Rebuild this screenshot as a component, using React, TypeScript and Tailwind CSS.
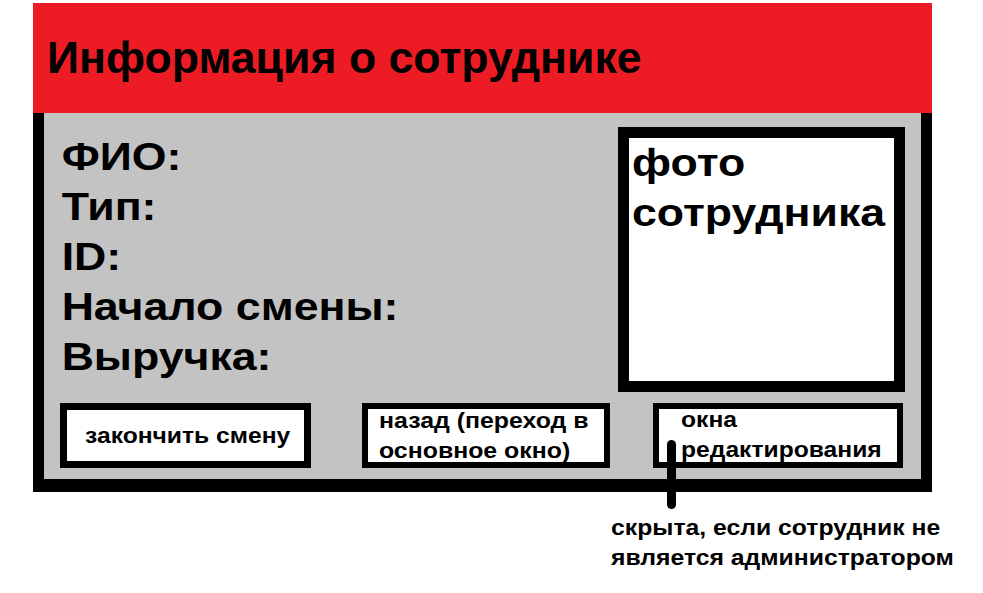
const labels = ["ФИО:", "Тип:", "ID:", "Начало смены:", "Выручка:"];

export default function App() {
  return (
    <div className="min-h-[593px] w-[983px] bg-white font-['Liberation_Sans',Arial,sans-serif] font-bold text-black">
      <div className="relative ml-[33px] w-[899px] pt-[3px]">
        <div className="flex h-[110px] items-center bg-[#ed1c24] pl-[14px]">
          <h1 className="origin-left scale-x-[1.014] text-[44px] leading-none">Информация о сотруднике</h1>
        </div>

        <div className="flex h-[379px] flex-col border-x-[11px] border-b-[13px] border-black bg-[#c3c3c3]">
          <div className="flex justify-between pt-[14px]">
            <div className="origin-left scale-x-[1.175] pl-[15px] pt-[5px] text-[38px] leading-[50px]">
              {labels.map((l) => (
                <div key={l}>{l}</div>
              ))}
            </div>
            <div className="mr-[16px] h-[265px] w-[287px] border-[11px] border-black bg-white pl-[3px] text-[38px] leading-[50px]">
              <div className="origin-left scale-x-[1.175] whitespace-nowrap">
                фото
                <br />
                сотрудника
              </div>
            </div>
          </div>

          <div className="mt-[11px] flex pl-[16px] text-[22px] leading-[30px]">
            <div className="flex h-[65px] w-[251px] items-center justify-center border-[7px] border-black bg-white pl-[4px]">
              <span className="scale-x-[1.12] whitespace-nowrap">закончить смену</span>
            </div>
            <div className="ml-[51px] h-[65px] w-[248px] border-[6px] border-black bg-white pl-[11px]">
              <div className="-mt-[3px] origin-left scale-x-[1.13] whitespace-nowrap">
                назад (переход в
                <br />
                основное окно)
              </div>
            </div>
            <div className="ml-[43px] h-[65px] w-[250px] border-[6px] border-black bg-white pl-[22px]">
              <div className="-mt-[4px] origin-left scale-x-[1.12] whitespace-nowrap">
                окна
                <br />
                редактирования
              </div>
            </div>
          </div>
        </div>

        <span className="absolute left-[634px] top-[440px] h-[69px] w-[9px] rounded-full bg-black" />

        <div className="ml-[578px] mt-[21px] origin-left scale-x-[1.125] whitespace-nowrap text-[22px] leading-[30px]">
          скрыта, если сотрудник не
          <br />
          является администратором
        </div>
      </div>
    </div>
  );
}
